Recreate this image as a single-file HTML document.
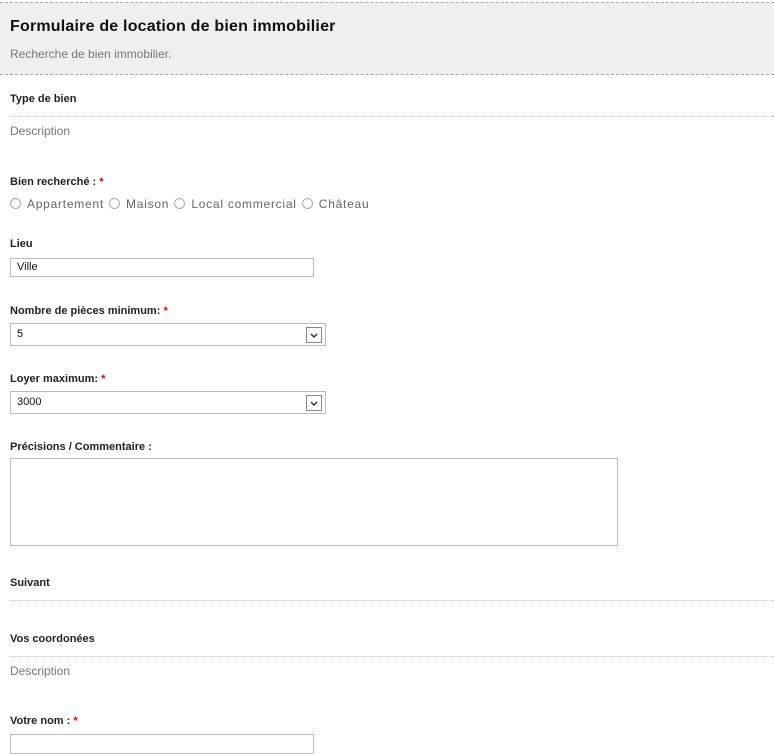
<!DOCTYPE html>
<html><head><meta charset="utf-8"><style>
*{margin:0;padding:0;box-sizing:border-box}
body{width:774px;height:750px;overflow:hidden;background:#fff;font-family:"Liberation Sans",Arial,sans-serif;position:relative;color:#222}
.a{position:absolute;white-space:nowrap}
.hd{position:absolute;left:0;top:2px;width:774px;height:73px;background:#efefef;border-top:1px dashed #aaa;border-bottom:1px dashed #aaa}
.b{font-weight:bold;font-size:11px;color:#222}
.s{color:#e00}
.g{color:#777;font-size:12px}
.ln{position:absolute;left:10px;width:764px;border-top:1px dotted #ccc}
.box{position:absolute;border:1px solid #bbb;background:#fff;font-size:11px;padding-left:6px;color:#111}
.arr{position:absolute;right:3px;top:3px;width:16px;height:16px;border:1px solid #888;background:#fff}
.arr svg{position:absolute;left:3px;top:5px}
.r{display:inline-block;width:11px;height:11px;border:1px solid #aaa;border-radius:50%;vertical-align:-1px;margin-right:6px;background:#fff}
</style></head><body>
<div class="hd"></div>
<div class="a" style="left:10px;top:18px;font-size:16px;font-weight:bold;color:#111;letter-spacing:0.2px">Formulaire de location de bien immobilier</div>
<div class="a g" style="left:10px;top:47px">Recherche de bien immobilier.</div>
<div class="a b" style="left:10px;top:93px">Type de bien</div>
<div class="ln" style="top:116px"></div>
<div class="a g" style="left:10px;top:124px">Description</div>
<div class="a b" style="left:10px;top:176px">Bien recherché : <span class="s">*</span></div>
<div class="a g" style="left:10px;top:197px;color:#666;letter-spacing:0.75px"><span class="r"></span>Appartement <span class="r" style="margin-left:1px"></span>Maison <span class="r" style="margin-left:1px"></span>Local commercial <span class="r" style="margin-left:1px"></span>Château</div>
<div class="a b" style="left:10px;top:238px">Lieu</div>
<div class="box" style="left:10px;top:258px;width:304px;height:19px;line-height:17px">Ville</div>
<div class="a b" style="left:10px;top:305px">Nombre de pièces minimum: <span class="s">*</span></div>
<div class="box" style="left:10px;top:323px;width:316px;height:23px;line-height:21px">5<div class="arr"><svg width="8" height="6"><path d="M1 1L4 4L7 1" stroke="#333" stroke-width="1.5" fill="none"/></svg></div></div>
<div class="a b" style="left:10px;top:373px">Loyer maximum: <span class="s">*</span></div>
<div class="box" style="left:10px;top:391px;width:316px;height:23px;line-height:21px">3000<div class="arr"><svg width="8" height="6"><path d="M1 1L4 4L7 1" stroke="#333" stroke-width="1.5" fill="none"/></svg></div></div>
<div class="a b" style="left:10px;top:441px">Précisions / Commentaire :</div>
<div class="box" style="left:10px;top:458px;width:608px;height:88px"></div>
<div class="a b" style="left:10px;top:577px">Suivant</div>
<div class="ln" style="top:600px"></div>
<div class="a b" style="left:10px;top:633px">Vos coordonées</div>
<div class="ln" style="top:656px"></div>
<div class="a g" style="left:10px;top:664px">Description</div>
<div class="a b" style="left:10px;top:715px">Votre nom : <span class="s">*</span></div>
<div class="box" style="left:10px;top:734px;width:304px;height:20px"></div>
</body></html>
